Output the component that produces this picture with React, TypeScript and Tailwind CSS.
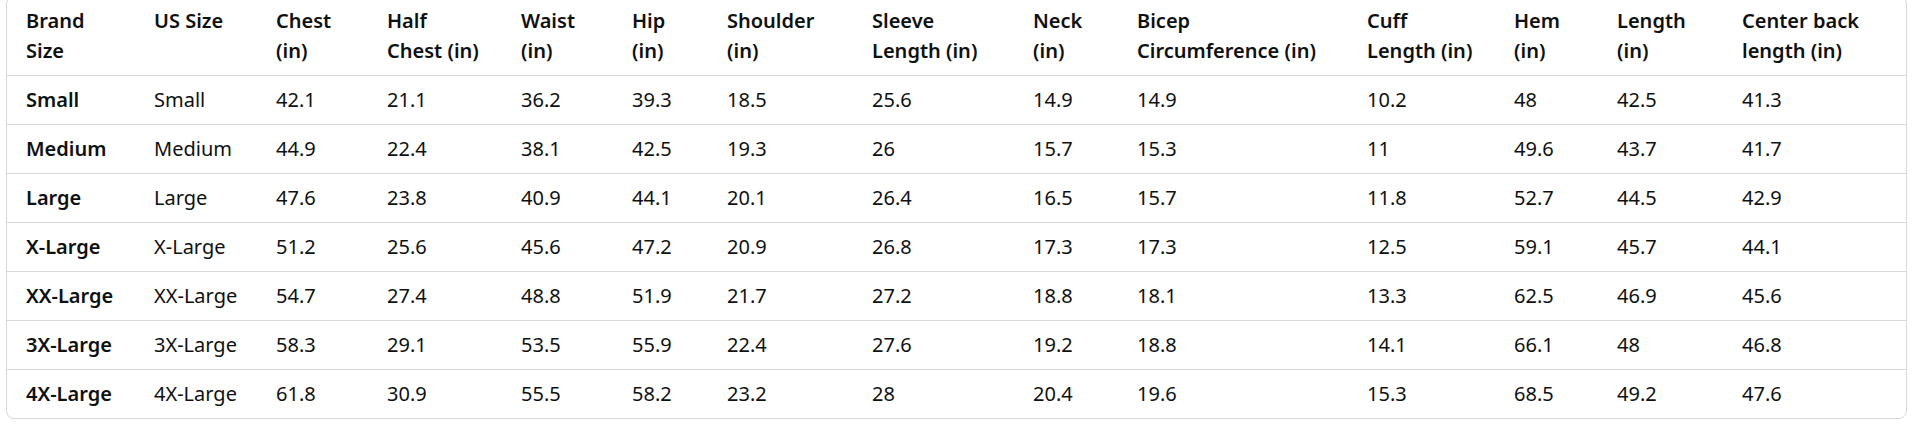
const COLS = [128, 122, 111, 134, 111, 95, 145, 161, 104, 230, 147, 103, 125, 184]

const HEADERS: string[][] = [
  ['Brand', 'Size'],
  ['US Size'],
  ['Chest', '(in)'],
  ['Half', 'Chest (in)'],
  ['Waist', '(in)'],
  ['Hip', '(in)'],
  ['Shoulder', '(in)'],
  ['Sleeve', 'Length (in)'],
  ['Neck', '(in)'],
  ['Bicep', 'Circumference (in)'],
  ['Cuff', 'Length (in)'],
  ['Hem', '(in)'],
  ['Length', '(in)'],
  ['Center back', 'length (in)'],
]

const ROWS: string[][] = [
  ['Small', 'Small', '42.1', '21.1', '36.2', '39.3', '18.5', '25.6', '14.9', '14.9', '10.2', '48', '42.5', '41.3'],
  ['Medium', 'Medium', '44.9', '22.4', '38.1', '42.5', '19.3', '26', '15.7', '15.3', '11', '49.6', '43.7', '41.7'],
  ['Large', 'Large', '47.6', '23.8', '40.9', '44.1', '20.1', '26.4', '16.5', '15.7', '11.8', '52.7', '44.5', '42.9'],
  ['X-Large', 'X-Large', '51.2', '25.6', '45.6', '47.2', '20.9', '26.8', '17.3', '17.3', '12.5', '59.1', '45.7', '44.1'],
  ['XX-Large', 'XX-Large', '54.7', '27.4', '48.8', '51.9', '21.7', '27.2', '18.8', '18.1', '13.3', '62.5', '46.9', '45.6'],
  ['3X-Large', '3X-Large', '58.3', '29.1', '53.5', '55.9', '22.4', '27.6', '19.2', '18.8', '14.1', '66.1', '48', '46.8'],
  ['4X-Large', '4X-Large', '61.8', '30.9', '55.5', '58.2', '23.2', '28', '20.4', '19.6', '15.3', '68.5', '49.2', '47.6'],
]

export default function App() {
  return (
    <div className="bg-white w-[1915px] h-[428px] overflow-hidden">
      <div
        className="ml-[6px] -mt-[4px] w-[1901px] rounded-[8px] border border-[#d5d9d9] overflow-hidden text-[#0f1111] text-[20px] leading-[30px]"
        style={{ fontFamily: '"Noto Sans", "Open Sans", sans-serif' }}
      >
        <table className="table-fixed border-collapse w-full">
          <colgroup>
            {COLS.map((w, i) => <col key={i} style={{ width: w }} />)}
          </colgroup>
          <thead>
            <tr className="border-b border-[#d5d9d9]">
              {HEADERS.map((h, i) => (
                <th key={i} className="text-left align-top font-semibold pl-[19px] pr-0 py-[9px] whitespace-nowrap">
                  {h.map((line, j) => (
                    <span key={j} className="block">{line}</span>
                  ))}
                </th>
              ))}
            </tr>
          </thead>
          <tbody>
            {ROWS.map((row, r) => (
              <tr key={r} className={r < ROWS.length - 1 ? 'border-b border-[#d5d9d9]' : ''}>
                {row.map((cell, c) => (
                  <td
                    key={c}
                    className={`text-left pl-[19px] pr-0 py-[9px] whitespace-nowrap ${c === 0 ? 'font-semibold' : 'font-normal'}`}
                  >
                    {cell}
                  </td>
                ))}
              </tr>
            ))}
          </tbody>
        </table>
      </div>
    </div>
  )
}
